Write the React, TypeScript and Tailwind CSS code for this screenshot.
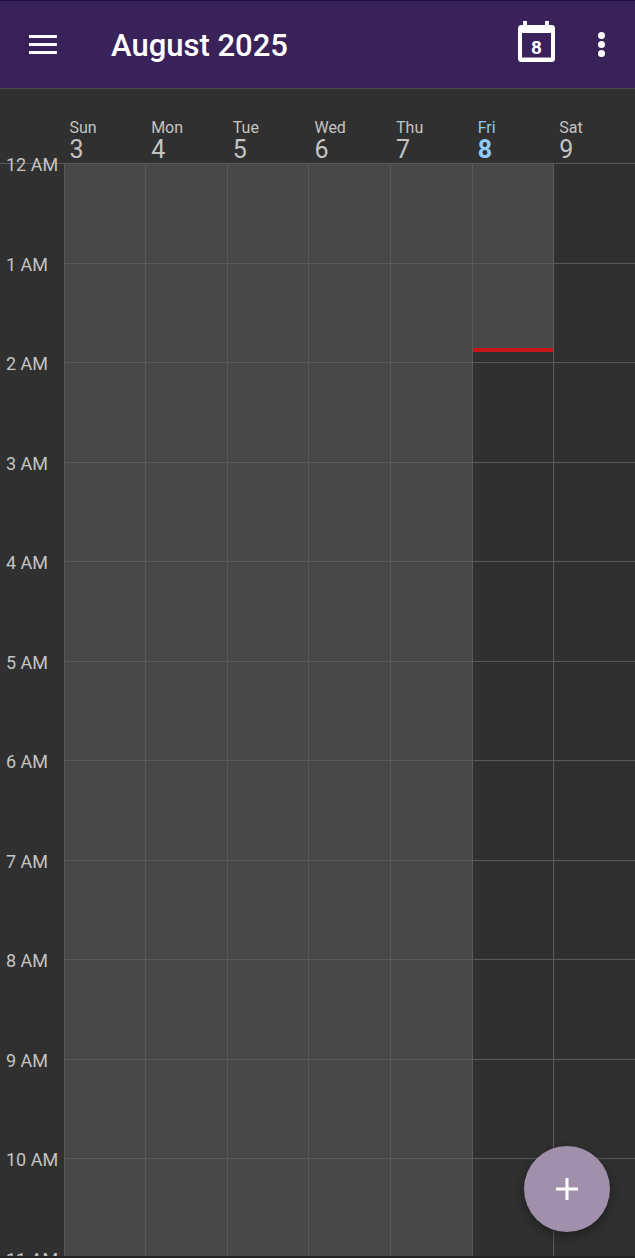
import React from 'react';

const days = [
  { name: 'Sun', num: 3 },
  { name: 'Mon', num: 4 },
  { name: 'Tue', num: 5 },
  { name: 'Wed', num: 6 },
  { name: 'Thu', num: 7 },
  { name: 'Fri', num: 8, today: true },
  { name: 'Sat', num: 9 },
];

const hours = ['12 AM', '1 AM', '2 AM', '3 AM', '4 AM', '5 AM', '6 AM', '7 AM', '8 AM', '9 AM', '10 AM', '11 AM'];

const HourLines = () => (
  <>
    {hours.map((h) => (
      <div key={h} className="h-[99.55px] border-b border-[#5a5a5a]"></div>
    ))}
  </>
);

export default function App() {
  return (
    <div className="relative h-[1258px] w-[635px] overflow-hidden border-b-2 border-[#252525] bg-[#303030] font-['Roboto',sans-serif]">
      {/* App bar */}
      <header className="flex h-[89px] items-center border-t border-b border-t-[#1f0f3a] border-b-[#4d4553] bg-[#39225a] pl-[29px] pr-[30px] text-white">
        <svg width="28" height="19" viewBox="0 0 28 19" fill="white">
          <rect x="0" y="0" width="28" height="3" />
          <rect x="0" y="8" width="28" height="3" />
          <rect x="0" y="16" width="28" height="3" />
        </svg>
        <h1 className="ml-[54px] mt-[2px] flex-1 text-[31px] font-medium leading-none">August 2025</h1>
        <svg width="37" height="41" viewBox="0 0 37 41" fill="none" className="mb-[6px]">
          <path fillRule="evenodd" fill="white" d="M5 0h4v4h18V0h4v4h2.500A3.500 3.500 0 0 1 37 7.500v30a3.500 3.500 0 0 1-3.500 3.500h-30A3.500 3.500 0 0 1 0 37.500v-30A3.500 3.500 0 0 1 3.500 4H5V0zM4 12v24.500h29V12H4z" />
          <text x="18.500" y="33" textAnchor="middle" fill="white" fontSize="19" fontWeight="700" fontFamily="Roboto, sans-serif">8</text>
        </svg>
        <div className="ml-[43px] flex h-[25px] w-[7px] flex-col justify-between">
          <div className="h-[7px] w-[7px] rounded-full bg-white"></div>
          <div className="h-[7px] w-[7px] rounded-full bg-white"></div>
          <div className="h-[7px] w-[7px] rounded-full bg-white"></div>
        </div>
      </header>

      {/* Week header */}
      <div className="flex h-[74px] items-end pl-[63.5px]">
        {days.map((d) => (
          <div key={d.name} className={`flex-1 pl-[6px] ${d.today ? 'text-[#90caf9]' : 'text-[#c4c4c4]'}`}>
            <div className="text-[16px] leading-[18px]">{d.name}</div>
            <div className={`text-[25px] leading-[26px] ${d.today ? 'font-bold' : ''}`}>{d.num}</div>
          </div>
        ))}
      </div>

      {/* Time grid */}
      <div className="flex border-t border-[#5a5a5a]">
        <div className="-mt-[10px] w-[63.5px] shrink-0">
          {hours.map((h) => (
            <div key={h} className="h-[99.55px] pl-[6px] text-[18px] leading-[22px] text-[#c4c4c4]">{h}</div>
          ))}
        </div>
        <div className="flex flex-1 border-l border-[#5a5a5a]">
          {days.map((d, i) => (
            <div
              key={d.name}
              className={`relative flex-1 ${i < 5 ? 'bg-[#484848]' : ''} ${i < 6 ? 'border-r border-[#5a5a5a]' : ''}`}
            >
              {d.today && <div className="absolute inset-x-0 top-0 h-[186px] bg-[#484848]"></div>}
              <div className="relative">
                <HourLines />
              </div>
              {d.today && <div className="absolute inset-x-0 top-[184px] h-[4px] bg-[#c8141c]"></div>}
            </div>
          ))}
        </div>
      </div>

      {/* Add button */}
      <button className="absolute left-[524px] top-[1146px] flex h-[86px] w-[86px] items-center justify-center rounded-full bg-[#a090ab] shadow-[0_4px_12px_rgba(0,0,0,0.4)]">
        <svg width="24" height="24" viewBox="0 0 24 24" fill="white">
          <rect x="10.500" y="1" width="3" height="22" />
          <rect x="1" y="10.500" width="22" height="3" />
        </svg>
      </button>
    </div>
  );
}
